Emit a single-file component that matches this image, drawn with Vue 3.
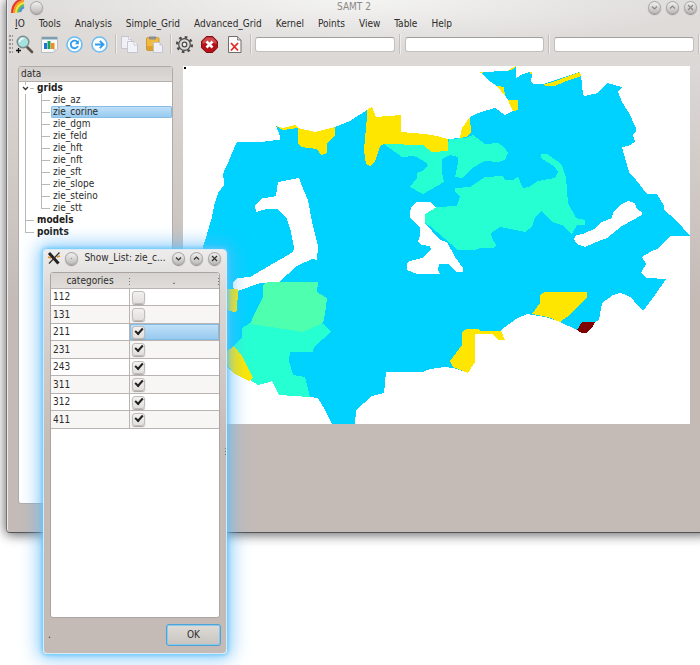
<script setup>
import { ref } from 'vue'

const menus = ['IO', 'Tools', 'Analysis', 'Simple_Grid', 'Advanced_Grid', 'Kernel', 'Points', 'View', 'Table', 'Help']
const grids = ['zie_az', 'zie_corine', 'zie_dgm', 'zie_feld', 'zie_hft', 'zie_nft', 'zie_sft', 'zie_slope', 'zie_steino', 'zie_stt']
const selected = ref('zie_corine')
const fields = ref(['', '', ''])
const categories = ref([
  { id: 112, on: false },
  { id: 131, on: false },
  { id: 211, on: true },
  { id: 231, on: true },
  { id: 243, on: true },
  { id: 311, on: true },
  { id: 312, on: true },
  { id: 411, on: true },
])
const current = ref(211)
</script>

<template>
  <div class="desktop">
    <main class="window">
      <header class="titlebar">
        <div class="side">
          <svg class="logo" viewBox="0 0 14 14" aria-hidden="true">
            <g fill="none" stroke-width="2.2">
              <path d="M1.2 13C1 6 5 0 13-1" stroke="#e8382c" />
              <path d="M3.2 13C3.2 7 7 2 13 1" stroke="#f79a1c" />
              <path d="M5.2 13C5.4 8 8 4 13 3" stroke="#f5e03a" />
              <path d="M7.2 12.5C7.4 9 10 6 13 5" stroke="#5fc14c" />
              <path d="M9 12C9.3 10 11 8 13 7" stroke="#4a8fd8" />
            </g>
          </svg>
          <button class="orb" aria-label="Window menu"></button>
        </div>
        <h1>SAMT 2</h1>
        <div class="side right">
          <button class="orb" aria-label="Minimize"><svg viewBox="0 0 13 13"><path d="M4 5.5l2.5 2.5L9 5.5" /></svg></button>
          <button class="orb" aria-label="Maximize"><svg viewBox="0 0 13 13"><path d="M4 7.5l2.5-2.5L9 7.5" /></svg></button>
          <button class="orb" aria-label="Close"><svg viewBox="0 0 13 13"><path d="M4 4l5 5M9 4l-5 5" /></svg></button>
        </div>
      </header>

      <nav class="menubar">
        <a v-for="m in menus" :key="m" href="#">
          <template v-if="m === 'IO'"><u>I</u>O</template>
          <template v-else>{{ m }}</template>
        </a>
      </nav>

      <div class="toolbar">
        <span class="grip"></span>
        <button class="tool" aria-label="Zoom">
          <svg viewBox="0 0 19 19">
            <path d="M11 11l6 6" stroke="#5d5148" stroke-width="2.6" stroke-linecap="round" />
            <circle cx="8" cy="7" r="5.8" fill="#a5e2dd" stroke="#7c8c90" stroke-width="1.4" />
            <path d="M4.500 7a4 4 0 0 1 4-3.500" stroke="#fff" stroke-width="1.5" fill="none" />
            <path d="M1 15.500h5M3.500 13v5" stroke="#111" stroke-width="1.3" />
          </svg>
        </button>
        <button class="tool" aria-label="Chart">
          <svg viewBox="0 0 19 19">
            <path d="M1.5 2h16v12l-4 3.5h-12z" fill="#f7f9fa" stroke="#b7bdc0" />
            <path d="M2 2h15v2.500H2z" fill="#7b9fb0" />
            <path d="M4 8h3v6H4z" fill="#1e72d8" /><path d="M7.500 6h3v8h-3z" fill="#19a05a" /><path d="M11 8h3.500v6H11z" fill="#f38b1e" />
            <path d="M13.500 17.500v-3.500h4z" fill="#d2d6d8" />
          </svg>
        </button>
        <button class="tool" aria-label="Reload">
          <svg viewBox="0 0 19 19">
            <circle cx="9.500" cy="9.500" r="7.500" fill="#fff" stroke="#6abdf4" stroke-width="1.6" />
            <path d="M12.800 7.500a3.800 3.800 0 1 0 .2 3.500" fill="none" stroke="#2d9bf0" stroke-width="1.8" /><path d="M13.800 5v4.200H9.800z" fill="#2d9bf0" />
          </svg>
        </button>
        <button class="tool" aria-label="Run">
          <svg viewBox="0 0 19 19">
            <circle cx="9.500" cy="9.500" r="7.500" fill="#fff" stroke="#6abdf4" stroke-width="1.6" />
            <path d="M5 9.500h8M9.800 5.800l3.700 3.700-3.700 3.700" fill="none" stroke="#2d9bf0" stroke-width="1.9" />
          </svg>
        </button>
        <span class="sep"></span>
        <button class="tool" aria-label="Copy">
          <svg viewBox="0 0 19 19" stroke="#bdbdcb" stroke-width=".8">
            <path d="M1.500 1.500h7l3 3v9h-10z" fill="#f0f0f6" /><path d="M8.500 1.500v3h3" fill="#fff" />
            <path d="M7.500 6.500h6.500l3.500 3.500v7.500h-10z" fill="#f2f2f9" /><path d="M14 6.500v3.500h3.500" fill="#fff" />
          </svg>
        </button>
        <button class="tool" aria-label="Paste">
          <svg viewBox="0 0 19 19">
            <rect x="1.500" y="2.500" width="12.500" height="13" rx="1.500" fill="#f1bb3d" stroke="#c58e1f" stroke-width=".8" />
            <path d="M4 1.500h7v3H4z" fill="#8c8c92" /><path d="M2 11h11v4H2z" fill="#e0a12b" />
            <path d="M8.500 7.500h6l3 3v7h-9z" fill="#f0f0f8" stroke="#bdbdcb" stroke-width=".8" /><path d="M14.500 7.500v3h3z" fill="#c7c7d4" />
          </svg>
        </button>
        <span class="sep"></span>
        <button class="tool" aria-label="Settings">
          <svg viewBox="0 0 19 19" fill="none" stroke="#4a4a4a">
            <circle cx="9.500" cy="9.500" r="7.400" stroke-width="2.4" stroke-dasharray="2.6 3.21" />
            <circle cx="9.500" cy="9.500" r="5.800" stroke-width="1.2" fill="#dcdad8" />
            <circle cx="9.500" cy="9.500" r="2.300" stroke-width="1.2" fill="#f1f0ef" />
          </svg>
        </button>
        <button class="tool" aria-label="Stop">
          <svg viewBox="0 0 19 19">
            <path d="M6.300 1.500h6.400l4.800 4.800v6.400l-4.800 4.800H6.300l-4.800-4.800V6.300z" fill="#b51217" stroke="#7d1013" />
            <path d="M6.500 2.500h6l4 4v2.500c-5-2-9-2-14 0V6.500z" fill="#cf4a4e" />
            <path d="M6.500 6.500l6 6M12.500 6.500l-6 6" stroke="#fff" stroke-width="2.6" />
          </svg>
        </button>
        <button class="tool" aria-label="Delete">
          <svg viewBox="0 0 19 19">
            <path d="M3.500 1.500h9l3.500 3.500v12.500H3.500z" fill="#fbfbfb" stroke="#706d6b" />
            <path d="M12.500 1.500v3.500H16" fill="#ccc" stroke="#706d6b" stroke-width=".8" />
            <path d="M6 8l7 7.500M13 8l-7 7.500" stroke="#e02a22" stroke-width="1.8" />
          </svg>
        </button>
        <template v-for="(f, i) in fields" :key="i">
          <span class="sep"></span>
          <input v-model="fields[i]" class="field" type="text" :aria-label="'Value ' + (i + 1)" />
        </template>
        <span class="sep"></span>
      </div>

      <div class="body">
        <section class="tree">
          <h2>data</h2>
          <ul>
            <li>
              <div class="row root">
                <span class="twist"><svg viewBox="0 0 16 12"><path d="M6.500 0v3M11 6.500h4" stroke="#b9b9b9" /><path d="M4 5l2.500 2.500L9 5" fill="none" stroke="#333" stroke-width="1.3" /></svg></span>
                <b>grids</b>
              </div>
              <ul>
                <li v-for="(g, i) in grids" :key="g" class="row" :class="{ selected: g === selected }">
                  <span class="guide pass"></span>
                  <span class="guide" :class="{ end: i === grids.length - 1 }"></span>
                  <button class="leaf" @click="selected = g">{{ g }}</button>
                </li>
              </ul>
            </li>
            <li class="row root"><span class="guide"></span><b>models</b></li>
            <li class="row root"><span class="guide end"></span><b>points</b></li>
          </ul>
        </section>

        <svg class="map" viewBox="183 66 507 358" shape-rendering="crispEdges" role="img" aria-label="Land cover map">
          <rect x="183" y="66" width="507" height="358" fill="#fff" />
          <path fill="#00d2ff" d="M203 247L207 234 212 217 214 206 218 193 224 185 224 180 223 175 225 169 228 163 232 153 237 142 264 142 265 141 280 140 280 136 276 126 283 129 295 127 298 128 315 132 335 127 350 121 367 110 372 107 376 117 401 115 401 132 437 136 448 139 460 138 462 128 470 117 478 113 495 108 498 110 505 115 513 111 508 100 504 94 497 86 491 82 480 72 507 71 516 66 516 78 523 74 530 72 532 75 531 81 533 84 543 84 580 72 581 75 583 95 585 96 598 93 607 83 622 87 618 92 622 102 629 113 636 128 636 131 633 135 635 142 628 146 622 147 625 158 629 172 636 180 647 194 657 194 664 206 664 210 676 220 690 236 670 236 657 249 650 252 642 257 646 264 641 273 647 278 666 279 655 295 643 311 636 304 632 298 626 295 620 293 613 295 602 303 599 320 595 322 592 328 586 333 577 330 560 322 545 317 527 314 516 319 501 330 504 340 475 334 475 362 468 373 453 368 445 367 430 369 423 372 386 372 384 393 372 396 356 410 355 424 332 424 325 410 318 398 310 397 279 395 272 381 258 385 250 380 233 373 220 360 200 340 190 290Z" />
          <g fill="#fff">
            <path d="M233 282L238 278 250 277 293 252 294 248 291 232 287 219 277 209 267 209 256 212 255 205 263 198 272 197 276 196 278 182 288 180 299 178 302 186 308 200 312 222 318 246 317 260 312 259 297 266 279 282 260 283 238 291 233 288Z" />
            <path d="M410 212L412 206 417 202 430 202 436 207 432 212 425 214 425 223 440 240 447 242 455 257 463 268 463 272 457 272 448 264 439 264 438 270 440 274 417 274 407 270 407 263 410 261 422 258 431 250 430 246 421 245 418 242 420 235 420 227 410 218Z" />
            <path d="M574 239L576 235 583 234 594 229 602 222 612 218 613 212 620 205 628 201 635 203 637 209 642 212 642 215 622 226 607 238 599 241 585 247 577 244Z" />
          </g>
          <g fill="#26ffd1">
            <path d="M384 144L423 145 432 152 447 151 449 139 466 138 473 135 485 144 498 143 504 147 508 153 505 160 498 162 485 161 472 168 463 178 455 177 458 163 458 157 450 155 442 159 442 172 444 182 430 190 423 194 410 187 417 178 417 173 422 171 428 166 427 163 417 157 413 156 402 157Z" />
            <path d="M455 188L470 187 485 177 503 176 505 180 513 180 518 177 523 188 529 187 538 181 555 178 558 172 555 167 541 158 541 154 547 154 557 161 562 165 566 177 568 203 576 218 585 220 585 225 577 225 572 234 562 225 552 222 542 211 535 217 532 227 525 232 511 229 500 227 491 233 492 238 496 245 494 248 480 248 475 250 458 250 430 226 425 223 425 214 437 207 457 206 460 197 455 191Z" />
            <path d="M250 323L242 328 242 337 234 346 242 356 253 378 250 380 258 385 266 383 272 381 279 395 310 397 305 377 293 375 289 361 290 352 313 352 314 347 331 332 323 324Z" />
          </g>
          <path fill="#4dffaf" d="M268 282L318 282 317 292 327 298 325 314 323 323 303 332 290 330 277 328 250 324 254 315 263 297 263 285Z" />
          <g fill="#ffe600">
            <path d="M276 126L283 128 295 125 298 128 315 132 335 127 335 136 327 143 327 153 321 155 317 149 301 147 298 143 298 128 283 130Z" />
            <path d="M367 110L372 107 376 117 401 115 401 132 425 134 437 136 448 139 448 151 432 152 423 145 384 144 380 146 375 162 370 166 366 164 364 150 367 117Z" />
            <path d="M460 138L462 128 470 117 471 133 466 137Z" />
            <path d="M497 86L504 87 505 96Z" /><path d="M508 100h10v10l-5 1-2-4z" />
            <path d="M507 71L516 66 514 69ZM480 72h3v1h-3zM530 72h2v2h-2z" />
            <path d="M543 84L550 83 580 72 581 76 569 80 555 86 545 86Z" />
            <path d="M545 292L587 292 587 297 567 317 560 322 548 317 532 314 540 303 540 295Z" />
            <path d="M467 329L479 329 480 331 501 331 501 334 475 334 475 362 468 373 453 367 450 361 462 345 462 332Z" />
            <path d="M227 289L238 289 237 311 234 312 227 310Z" />
            <path d="M234 346L242 356 253 378 249 381 233 373 226 363 226 352Z" />
          </g>
          <path fill="#800000" d="M582 322L595 322 592 328 586 333 582 333 577 330Z" />
          <path fill="#fff" d="M475 334h18l5 6h6v20h-29z" />
          <path fill="#ffe600" d="M493 334L497 331 501 331 505 340 498 340Z" />
          <rect x="184" y="67" width="2" height="2" fill="#000" />
        </svg>
      </div>
    </main>

    <section class="dialog" role="dialog" aria-labelledby="dialog-title">
      <header class="dialog-title">
        <svg class="xicon" viewBox="0 0 14 14" aria-hidden="true">
          <path d="M2 2l9.500 10.500" stroke="#222" stroke-width="3" /><path d="M12.500 1.500L2 12.500" stroke="#333" stroke-width="1.3" />
          <path d="M1 6l3 1M10 6l3-1" stroke="#e08a28" stroke-width="1.6" />
        </svg>
        <button class="orb dark" aria-label="Window menu"><svg viewBox="0 0 13 13"><path class="dot" d="M6 6.500h1" /></svg></button>
        <h2 id="dialog-title">Show_List: zie_c...</h2>
        <button class="orb dark" aria-label="Minimize"><svg viewBox="0 0 13 13"><path d="M4 5.500l2.500 2.500L9 5.500" /></svg></button>
        <button class="orb dark" aria-label="Maximize"><svg viewBox="0 0 13 13"><path d="M4 7.500l2.500-2.500L9 7.500" /></svg></button>
        <button class="orb dark" aria-label="Close"><svg viewBox="0 0 13 13"><path d="M4 4l5 5M9 4l-5 5" /></svg></button>
      </header>
      <div class="list">
        <table>
          <thead>
            <tr><th class="name">categories</th><th>.</th></tr>
          </thead>
          <tbody>
            <tr v-for="c in categories" :key="c.id" @click="current = c.id">
              <td><label :for="'cat-' + c.id">{{ c.id }}</label></td>
              <td :class="{ current: c.id === current }"><input :id="'cat-' + c.id" v-model="c.on" type="checkbox" /></td>
            </tr>
          </tbody>
        </table>
      </div>
      <footer>
        <span>.</span>
        <button class="ok">OK</button>
      </footer>
      <span class="edge-grip"></span>
    </section>
  </div>
</template>

<style>
html, body { margin: 0; background: #fff; }
</style>

<style scoped>
.desktop {
  position: relative;
  box-sizing: border-box;
  padding-left: 6px;
  overflow: hidden;
  min-height: 100vh;
  font: 10px/12px "DejaVu Sans Condensed", "Open Sans", sans-serif;
  color: #2d2b2a;
}
button { font: inherit; color: inherit; border: 0; padding: 0; background: none; }
h1, h2 { margin: 0; font: inherit; }
ul { list-style: none; margin: 0; padding: 0; }

.window {
  border-left: 1px solid #77757a;
  border-bottom: 1px solid #55535a;
  border-bottom-left-radius: 4px;
  box-shadow: 0 1px 12px 1px rgba(0, 0, 0, .6), inset 1px 0 #eceae9;
  margin-right: -8px;
  padding-right: 8px;
  background: radial-gradient(ellipse 340px 50px at 50% 0, #f4f4f3, rgba(240, 239, 238, 0)), linear-gradient(#dfdddb 0, #dcd8d5 66px, #c4bbb7 300px);
}
.titlebar { display: grid; grid-template-columns: 1fr auto 1fr; align-items: center; height: 11px; padding: 0 3px 0 4px; }
.titlebar h1 { color: #8b8886; }
.side { display: flex; align-items: center; gap: 5px; }
.right { justify-content: flex-end; }
.logo { width: 14px; height: 14px; }
.orb {
  width: 13px; height: 13px; flex: none; border-radius: 50%;
  background: linear-gradient(#f5f5f5, #b9b7b5);
  box-shadow: 0 0 0 1px #aaa7a5 inset, 0 1px 1px #8f8c8a;
}
.orb svg { display: block; fill: none; stroke: #8b8987; stroke-width: 1.2; }
.orb.dark svg { stroke: #333; }
.orb.dark .dot { stroke: #888; }

.menubar { display: flex; gap: 14px; height: 14px; padding: 7px 8px 0; }
.menubar a { color: inherit; text-decoration: none; }

.toolbar { display: flex; align-items: center; height: 24px; padding-left: 2px; }
.grip { width: 4px; height: 18px; margin-right: 2px; background: radial-gradient(circle at 1px 1px, #9a9694 1px, transparent 1px) 0 0 / 3px 4px; }
.tool { width: 19px; height: 19px; margin-right: 6px; flex: none; }
.tool svg { display: block; width: 19px; height: 19px; }
.sep { width: 1px; height: 20px; flex: none; margin: 0 5px 0 4px; background: #c4c0bd; box-shadow: 1px 0 #efedec; }
.sep:last-child { margin-right: 1px; }
.tool + .sep { margin: 0 4px 0 0; }
.field {
  flex: 1; min-width: 0; height: 15px; box-sizing: border-box; padding: 0 3px; font: inherit;
  border: 1px solid #c3bfbc; border-top-color: #a29e9b; border-radius: 3px; background: #fff; outline: 0;
}

.body { display: grid; grid-template-columns: 155px 1fr; gap: 10px; padding: 10px 10px 28px 11px; }
.tree { box-sizing: border-box; min-height: 438px; border: 1px solid #b1aba8; border-radius: 3px; background: #fff; overflow: hidden; }
.tree h2 { height: 14px; line-height: 14px; padding-left: 2px; background: linear-gradient(#d3cfcc, #dedad8); border-bottom: 1px solid #b5b0ad; }
.row { display: flex; height: 12px; }
.root b { padding-left: 2px; color: #1c1b1a; }
.twist, .guide { width: 16px; flex: none; }
.twist svg { display: block; }
.guide { background: linear-gradient(#b9b9b9, #b9b9b9) 6px 0 / 1px 100% no-repeat, linear-gradient(#b9b9b9, #b9b9b9) 6px 6px / 9px 1px no-repeat; }
.guide.pass { background: linear-gradient(#b9b9b9, #b9b9b9) 6px 0 / 1px 100% no-repeat; }
.guide.end { background: linear-gradient(#b9b9b9, #b9b9b9) 6px 0 / 1px 6px no-repeat, linear-gradient(#b9b9b9, #b9b9b9) 6px 6px / 9px 1px no-repeat; }
.leaf { flex: 1; text-align: left; padding-left: 2px; }
.selected .leaf { background: linear-gradient(#c3e2f8, #94c8ef); border-radius: 2px; box-shadow: inset 0 0 0 1px #84bce4; }
.map { display: block; width: 100%; height: auto; }

.dialog {
  position: absolute; left: 43px; top: 249px; box-sizing: border-box; width: 184px; min-height: 405px;
  display: flex; flex-direction: column;
  padding: 0 6px 7px;
  border: 1px solid #d8eaf5; border-radius: 4px;
  background: linear-gradient(#eeedec 0, #dcd9d7 40px, #c4bab6 200px);
  box-shadow: 0 0 4px 1px #5fc5fb, 0 0 18px 5px rgba(95, 185, 250, .7);
}
.dialog-title { display: flex; align-items: center; height: 16px; gap: 5px; padding: 0 0 6px; margin-right: -1px; }
.dialog-title h2 { flex: 1; text-align: center; white-space: nowrap; }
.xicon { width: 14px; height: 14px; margin: 0 -1px 0 -3px; flex: none; }
.list { flex: 1; border: 1px solid #aaa5a2; border-radius: 3px; background: #fff; overflow: hidden; }
table { width: 100%; border-collapse: separate; border-spacing: 0; table-layout: fixed; }
th { height: 15px; padding: 0; font-weight: 400; background: linear-gradient(#d6d3d0, #dfdcda); border-bottom: 1px solid #b9b4b1; }
th::after { content: ""; float: right; width: 1px; height: 7px; margin-top: 3px; background: repeating-linear-gradient(#777 0 1px, transparent 1px 3px); }
th.name { width: 79px; }
td { box-sizing: border-box; height: 17px; padding: 0 0 0 2px; border-bottom: 1px solid #b9b4b1; }
tr:nth-child(even) td { height: 18px; background: #f7f6f5; }
td:first-child { border-right: 1px solid #b9b4b1; }
td.current { background: linear-gradient(#c3e2f8, #94c8ef); box-shadow: inset 0 0 0 1px #84bce4; }
td input {
  appearance: none; display: block; box-sizing: border-box; width: 13px; height: 13px; margin: 0;
  border: 1px solid #c0bcba; border-radius: 3px; background: linear-gradient(#f2f1f0, #e2dfdd); box-shadow: 0 1px 1px #a5a19e;
}
td input:checked::after {
  content: ""; display: block; width: 6px; height: 3px; margin: 1px 0 0 2px;
  border: solid #222; border-width: 0 0 2px 2px; transform: rotate(-48deg);
}
footer { display: flex; justify-content: space-between; align-items: center; padding: 6px 0 0; margin: 0 -1px 0 -2px; }
.ok { width: 55px; height: 22px; border: 1px solid #4ba3d6; border-radius: 3px; background: linear-gradient(#dfdcd8, #c8c3be); box-shadow: inset 0 0 0 1px #8cc8ea; }
.edge-grip { position: absolute; right: 0; top: 198px; width: 1px; height: 7px; background: repeating-linear-gradient(#777 0 1px, transparent 1px 3px); }
</style>
